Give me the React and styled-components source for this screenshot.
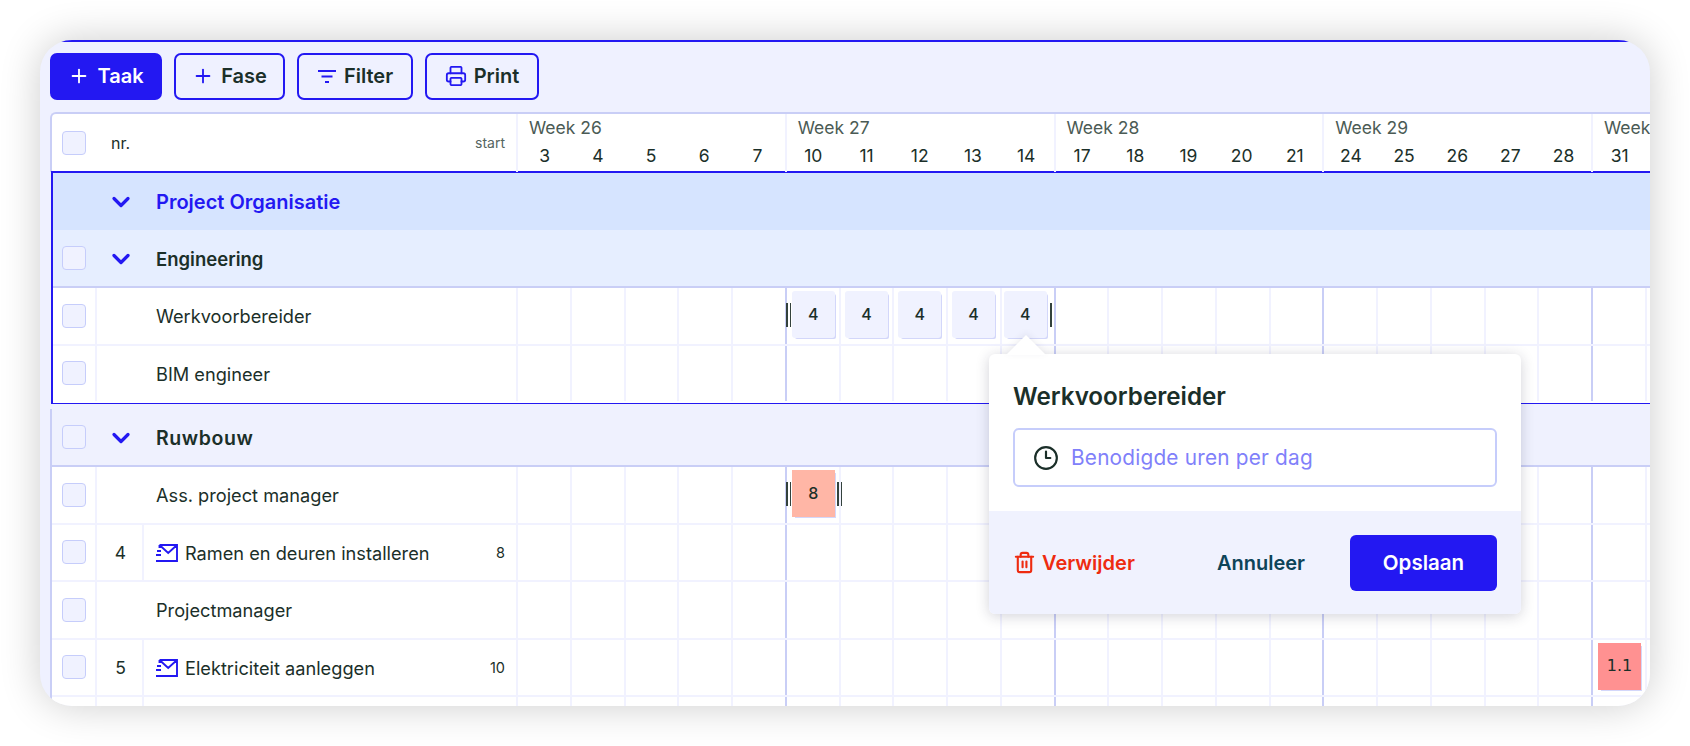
import React from 'react';
import styled, { createGlobalStyle } from 'styled-components';
import { Plus, Printer, Clock3, Trash2, ChevronDown } from 'lucide-react';

const GlobalStyle = createGlobalStyle`
  html, body {
    margin: 0;
    background: #fff;
    font-family: 'Inter', 'Liberation Sans', sans-serif;
    color: #1b2f29;
  }
`;

const BLUE = '#2318f2';
const WEEK_LINE = '#c9cef6';
const DAY_LINE = '#f1f2ff';
const DAY_WIDTH = 53.75;

const Page = styled.div`
  width: 1690px;
  height: 746px;
  padding: 40px;
  box-sizing: border-box;
  overflow: hidden;
`;

const Card = styled.div`
  position: relative;
  width: 1610px;
  height: 666px;
  background: #eff1ff;
  border-radius: 32px;
  box-shadow: 0 0 40px rgba(0, 0, 0, 0.2);
  overflow: hidden;
`;

const TopLine = styled.div`
  height: 1.5px;
  background: ${BLUE};
`;

const Toolbar = styled.div`
  display: flex;
  gap: 12px;
  padding: 11px 0 0 10px;
  height: 47px;
`;

const ToolButton = styled.button`
  display: flex;
  align-items: center;
  justify-content: center;
  gap: 7px;
  width: ${p => p.$width}px;
  height: 47px;
  box-sizing: border-box;
  margin: 0;
  padding: 0;
  border: 2px solid ${BLUE};
  border-radius: 7px;
  background: ${p => (p.$primary ? BLUE : 'transparent')};
  color: ${p => (p.$primary ? '#fff' : '#1b2f29')};
  font: 600 20px 'Inter', sans-serif;

  svg {
    color: ${p => (p.$primary ? '#fff' : BLUE)};
  }
`;

const Table = styled.div`
  margin: 12px 0 0 10px;
  width: 1600px;
`;

const HeadRow = styled.div`
  display: flex;
  height: 60px;
  box-sizing: border-box;
  background: #fff;
  border-top: 2px solid ${WEEK_LINE};
  border-left: 2px solid ${WEEK_LINE};
  border-top-left-radius: 6px;
`;

const HeadLeft = styled.div`
  display: flex;
  align-items: center;
  flex: none;
  width: 466px;
  box-sizing: border-box;
  border-right: 2px solid ${DAY_LINE};
`;

const Nr = styled.span`
  margin-left: 10px;
  font-size: 16px;
`;

const Start = styled.span`
  margin-left: auto;
  padding-right: 11px;
  font-size: 14px;
  color: #56655f;
`;

const Weeks = styled.div`
  display: flex;
  flex: none;
`;

const Week = styled.div`
  flex: none;
  width: ${DAY_WIDTH * 5}px;
  box-sizing: border-box;
  border-right: 2px solid ${DAY_LINE};
`;

const WeekLabel = styled.div`
  padding: 2px 0 0 11px;
  font-size: 17.5px;
  line-height: 24px;
  color: #4b5b55;
  white-space: nowrap;
`;

const Days = styled.div`
  display: flex;
  padding-top: 3px;
`;

const DayNum = styled.div`
  flex: none;
  width: 53.2px;
  text-align: center;
  font-size: 17.5px;
  line-height: 26px;
`;

const BlueSection = styled.div`
  margin-left: 1px;
  margin-top: -1px;
  border: 2px solid ${BLUE};
  border-right: 0;
  border-bottom-width: 1.5px;
`;

const PlainSection = styled.div`
  margin-top: 5px;
  border-left: 2px solid ${WEEK_LINE};
`;

const Row = styled.div`
  display: flex;
  height: ${p => p.$height || 57.5}px;
  box-sizing: border-box;
  background: ${p => p.$bg || '#fff'};
  border-bottom: 2px solid ${p => p.$line || DAY_LINE};
`;

const CheckCell = styled.div`
  display: flex;
  align-items: center;
  flex: none;
  width: ${p => p.$width}px;
  height: 100%;
  box-sizing: border-box;
  padding-left: ${p => p.$pad}px;
  border-right: ${p => (p.$divided ? `2px solid ${DAY_LINE}` : '0')};
`;

const Check = styled.div`
  width: 24px;
  height: 24px;
  box-sizing: border-box;
  background: #f0f2ff;
  border: 1.5px solid #c6cdfb;
  border-radius: 4px;
`;

const NrCell = styled.div`
  flex: none;
  width: 47px;
  box-sizing: border-box;
  padding-left: 2px;
  line-height: 55px;
  text-align: center;
  font-size: 17.5px;
  border-right: 2px solid ${DAY_LINE};
`;

const NameCell = styled.div`
  display: flex;
  align-items: center;
  flex: none;
  gap: 7px;
  width: ${p => p.$width}px;
  box-sizing: border-box;
  padding: 1px 11px 0 ${p => p.$pad}px;
  border-right: 2px solid ${DAY_LINE};
  font-size: 18.2px;
`;

const GroupCell = styled.div`
  display: flex;
  align-items: center;
  flex: none;
  width: 1400px;
  padding-top: 3px;
  font-size: ${p => p.$size}px;
  letter-spacing: ${p => p.$spacing || 0}px;
  font-weight: 600;
  color: ${p => p.$color || '#1b2f29'};

  svg {
    flex: none;
    color: ${BLUE};
    margin: 0 21px 0 10px;
  }
`;

const StartValue = styled.span`
  margin-left: auto;
  font-size: 14.5px;
`;

const Cell = styled.div`
  position: relative;
  flex: none;
  width: ${DAY_WIDTH}px;
  height: 100%;
  box-sizing: border-box;
  padding: 3px 0 0 5px;
  border-right: 2px solid ${p => (p.$weekEnd ? WEEK_LINE : DAY_LINE)};
`;

const Chip = styled.div`
  width: 43px;
  height: 47px;
  margin-left: ${p => p.$shift || 0}px;
  background: ${p => p.$bg || '#f0f2ff'};
  border-radius: ${p => (p.$square ? 0 : 3)}px;
  box-shadow: 2px 2px 0 -1px #d3d7fa;
  text-align: center;
  line-height: 46px;
  font-size: 16px;
  font-weight: 500;
  font-family: ${p => (p.$serifOne ? "'DejaVu Sans', sans-serif" : 'inherit')};
`;

const Handle = styled.span`
  position: absolute;
  top: 15px;
  height: 24px;
  width: ${p => (p.$double ? 5 : 2)}px;
  box-sizing: border-box;
  border-left: 2px solid #33423d;
  border-right: ${p => (p.$double ? '1.5px solid #33423d' : '0')};
  left: ${p => p.$left}px;
`;

const Popup = styled.div`
  position: absolute;
  left: 949px;
  top: 314px;
  width: 532px;
  height: 260px;
  display: flex;
  flex-direction: column;
  border-radius: 6px;
  background: #fff;
  box-shadow: 0 2px 14px rgba(30, 30, 60, 0.2);

  &::before {
    content: '';
    position: absolute;
    top: -19px;
    left: 17px;
    width: 0;
    height: 0;
    border-left: 20px solid transparent;
    border-right: 20px solid transparent;
    border-bottom: 20px solid #fff;
    filter: drop-shadow(0 -2px 3px rgba(30, 30, 60, 0.08));
  }
`;

const PopupBody = styled.div`
  flex: 1;
  padding: 28px 24px 0 24px;
`;

const PopupTitle = styled.div`
  font-size: 24.2px;
  line-height: 30px;
  font-weight: 600;
`;

const Field = styled.div`
  display: flex;
  align-items: center;
  gap: 12px;
  height: 59px;
  box-sizing: border-box;
  margin-top: 16px;
  padding-left: 18px;
  border: 2px solid #c6cdfb;
  border-radius: 6px;
  color: #1b2f29;
`;

const Placeholder = styled.span`
  color: #8080fa;
  font-size: 20.8px;
  letter-spacing: 0.2px;
`;

const PopupFooter = styled.div`
  display: flex;
  align-items: center;
  height: 103px;
  box-sizing: border-box;
  padding: 0 24px 0 24px;
  background: #f0f2fe;
  border-radius: 0 0 6px 6px;
`;

const DeleteAction = styled.div`
  display: flex;
  align-items: center;
  gap: 6px;
  color: #ee2b10;
  font-size: 20px;
  font-weight: 600;
`;

const CancelAction = styled.div`
  margin-left: auto;
  margin-right: 45px;
  color: #0d4458;
  font-size: 20px;
  font-weight: 600;
`;

const SaveButton = styled.button`
  width: 147px;
  height: 56px;
  border: 0;
  border-radius: 6px;
  background: ${BLUE};
  color: #fff;
  font: 600 20.5px 'Inter', sans-serif;
`;

const MailSvg = styled.svg`
  flex: none;
`;

const FilterIcon = () => (
  <svg width="20" height="20" viewBox="0 0 20 20" fill="none" stroke={BLUE} strokeWidth="2">
    <path d="M1 5h18M4.5 10.5h11M8 16h4" />
  </svg>
);

const MailFastIcon = () => (
  <MailSvg width="22" height="18" viewBox="0 0 22 18" fill="none" stroke={BLUE} strokeWidth="1.9">
    <path d="M3.5 1H21v16H0M3.5 1l8.7 8L21 1M3.5 1v3M1 7h4M0 11h5" />
  </MailSvg>
);

const weeks = [
  { label: 'Week 26', days: [3, 4, 5, 6, 7] },
  { label: 'Week 27', days: [10, 11, 12, 13, 14] },
  { label: 'Week 28', days: [17, 18, 19, 20, 21] },
  { label: 'Week 29', days: [24, 25, 26, 27, 28] },
  { label: 'Week 30', days: [31] },
];

const cellIndexes = Array.from({ length: 22 }, (_, i) => i);

// fills per task row: day index -> what sits in that cell
const DayCells = ({ chips = {} }) => (
  <>
    {cellIndexes.map(i => (
      <Cell key={i} $weekEnd={i % 5 === 4}>
        {chips[i]}
      </Cell>
    ))}
  </>
);

const TaskRow = ({ label, nr, start, mail, numbered, inset, chips, height, line }) => (
  <Row $height={height} $line={line}>
    <CheckCell $width={inset ? 44 : 45} $pad={inset ? 9 : 10} $divided>
      {label && <Check />}
    </CheckCell>
    {numbered && <NrCell>{nr}</NrCell>}
    <NameCell $width={numbered ? 374 : 421} $pad={numbered ? 12 : 59}>
      {mail && <MailFastIcon />}
      {label}
      {start && <StartValue>{start}</StartValue>}
    </NameCell>
    <DayCells chips={chips} />
  </Row>
);

const GroupRow = ({ label, bg, line, height, color, size, spacing, noCheck, inset }) => (
  <Row $bg={bg} $line={line} $height={height}>
    <CheckCell $width={inset ? 44 : 45} $pad={inset ? 9 : 10}>
      {!noCheck && <Check />}
    </CheckCell>
    <GroupCell $color={color} $size={size} $spacing={spacing}>
      <ChevronDown size={28} strokeWidth={2.8} />
      {label}
    </GroupCell>
  </Row>
);

const engineeringChips = {
  5: (
    <>
      <Handle $double $left={-1} />
      <Chip>4</Chip>
    </>
  ),
  6: <Chip $shift={-0.5}>4</Chip>,
  7: <Chip $shift={-1}>4</Chip>,
  8: <Chip $shift={-1}>4</Chip>,
  9: (
    <>
      <Chip $shift={-3}>4</Chip>
      <Handle $left={48} />
    </>
  ),
};

const managerChips = {
  5: (
    <>
      <Handle $double $left={-1} />
      <Chip $bg="#ffb6a6" $square>8</Chip>
      <Handle $double $left={50} />
    </>
  ),
};

const electricChips = {
  20: <Chip $bg="#ff9191" $square $serifOne>1.1</Chip>,
};

export default function App() {
  return (
    <Page>
      <GlobalStyle />
      <Card>
        <TopLine />
        <Toolbar>
          <ToolButton $primary $width={112}>
            <Plus size={22} strokeWidth={2} />
            Taak
          </ToolButton>
          <ToolButton $width={111}>
            <Plus size={22} strokeWidth={2} />
            Fase
          </ToolButton>
          <ToolButton $width={116}>
            <FilterIcon />
            Filter
          </ToolButton>
          <ToolButton $width={114}>
            <Printer size={22} strokeWidth={2} />
            Print
          </ToolButton>
        </Toolbar>
        <Table>
          <HeadRow>
            <HeadLeft>
              <CheckCell $width={49} $pad={10}>
                <Check />
              </CheckCell>
              <Nr>nr.</Nr>
              <Start>start</Start>
            </HeadLeft>
            <Weeks>
              {weeks.map(week => (
                <Week key={week.label}>
                  <WeekLabel>{week.label}</WeekLabel>
                  <Days>
                    {week.days.map(day => (
                      <DayNum key={day}>{day}</DayNum>
                    ))}
                  </Days>
                </Week>
              ))}
            </Weeks>
          </HeadRow>
          <BlueSection>
            <GroupRow label="Project Organisatie" bg="#d6e4ff" line="#d6e4ff" height={57} color={BLUE} size={20} noCheck inset />
            <GroupRow label="Engineering" bg="#e6eeff" line="#c9cef6" height={58} size={18.5} inset />
            <TaskRow label="Werkvoorbereider" inset chips={engineeringChips} height={58} />
            <TaskRow label="BIM engineer" inset height={57} line="#fff" />
          </BlueSection>
          <PlainSection>
            <GroupRow label="Ruwbouw" bg="#eff1fe" line="#c9cef6" height={58} size={19.5} spacing={0.6} />
            <TaskRow label="Ass. project manager" chips={managerChips} height={58} />
            <TaskRow label="Ramen en deuren installeren" nr="4" start="8" mail numbered />
            <TaskRow label="Projectmanager" />
            <TaskRow label="Elektriciteit aanleggen" nr="5" start="10" mail numbered chips={electricChips} />
            <TaskRow numbered />
          </PlainSection>
        </Table>
        <Popup>
          <PopupBody>
            <PopupTitle>Werkvoorbereider</PopupTitle>
            <Field>
              <Clock3 size={26} strokeWidth={2} />
              <Placeholder>Benodigde uren per dag</Placeholder>
            </Field>
          </PopupBody>
          <PopupFooter>
            <DeleteAction>
              <Trash2 size={23} strokeWidth={2.2} />
              Verwijder
            </DeleteAction>
            <CancelAction>Annuleer</CancelAction>
            <SaveButton>Opslaan</SaveButton>
          </PopupFooter>
        </Popup>
      </Card>
    </Page>
  );
}
